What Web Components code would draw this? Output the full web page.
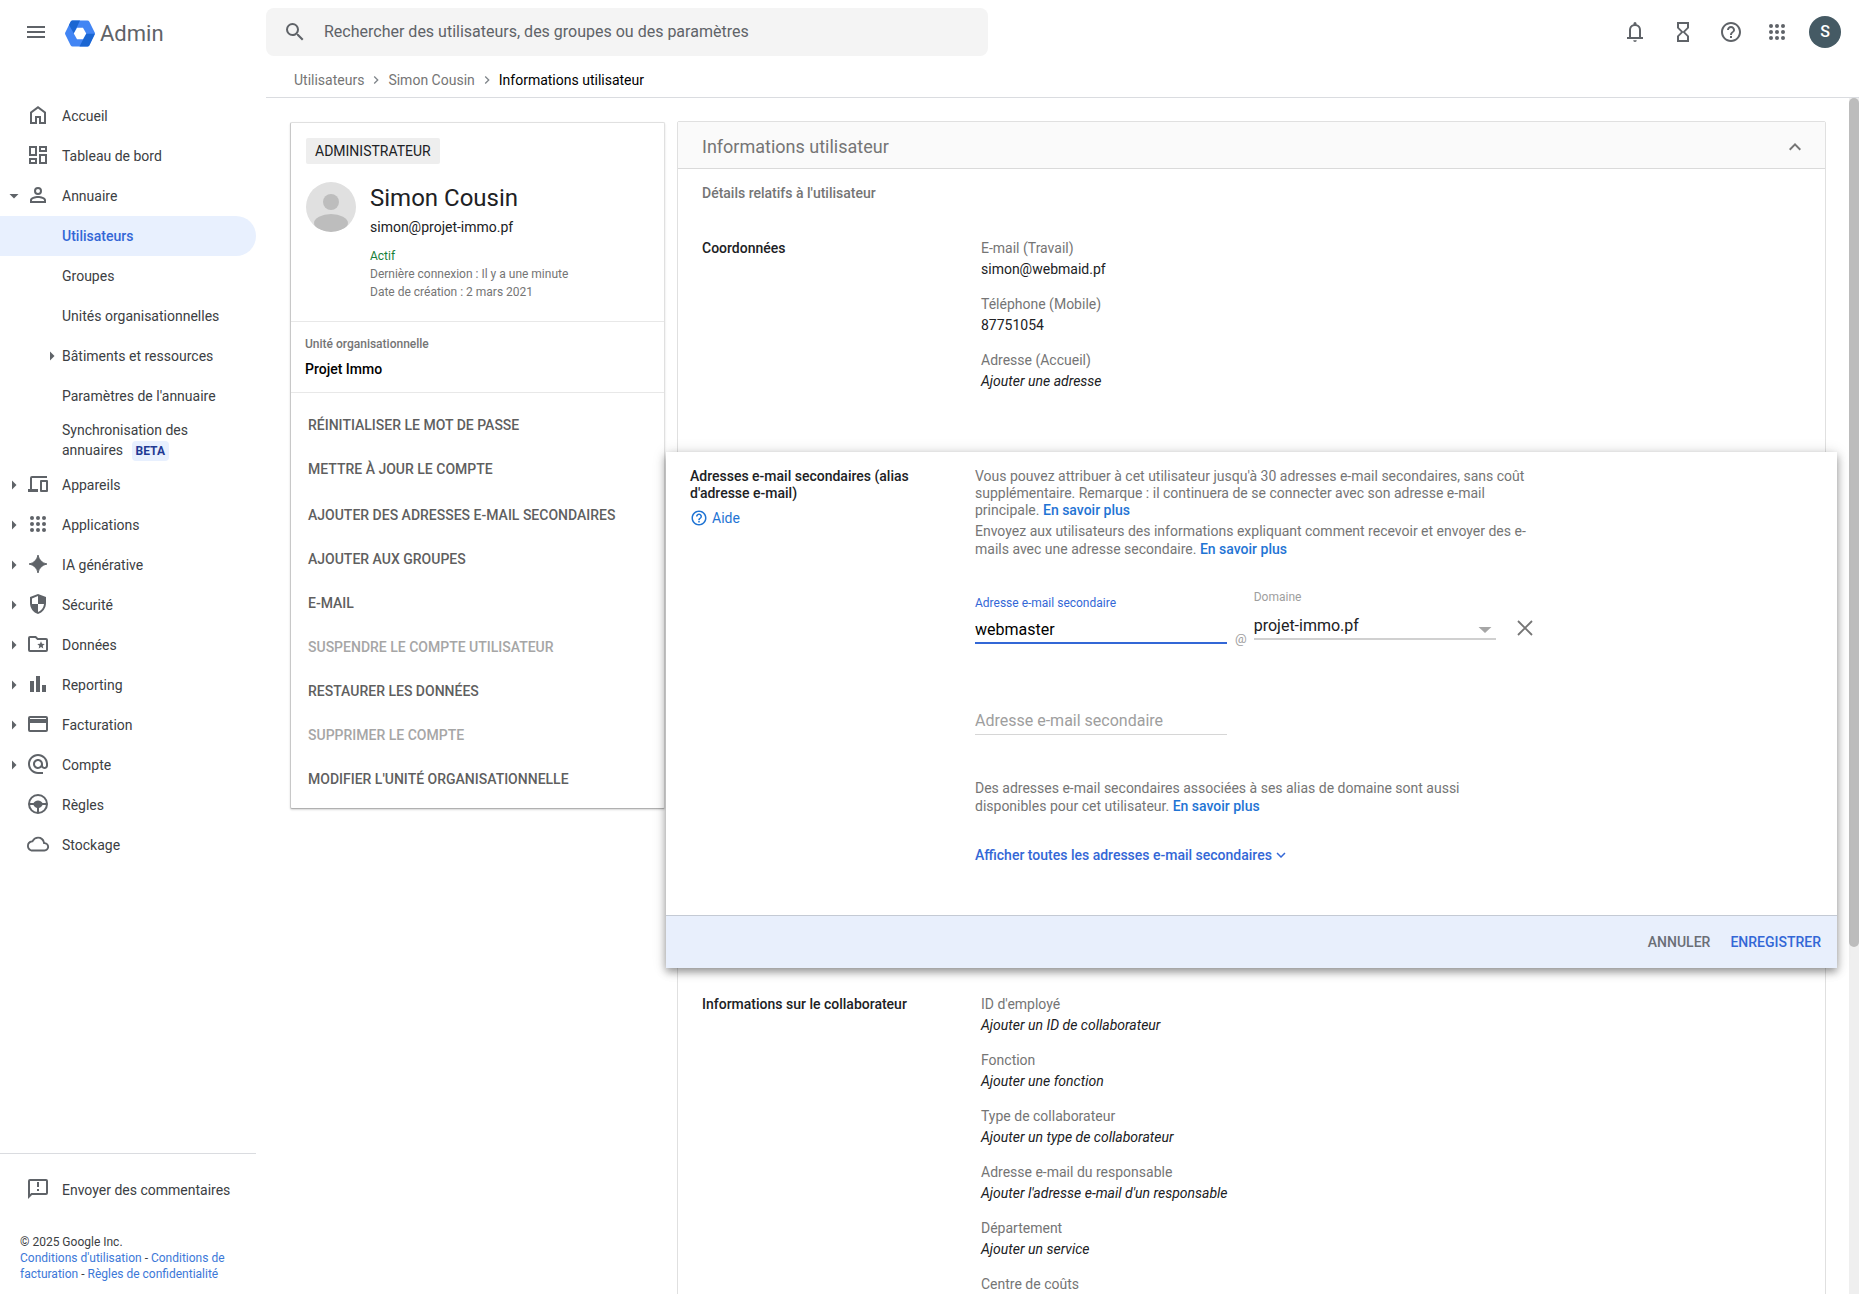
<!DOCTYPE html>
<html lang="fr">
<head>
<meta charset="utf-8">
<title>Admin - Informations utilisateur</title>
<style>
  body { margin: 0; font-family: Roboto, "Liberation Sans", sans-serif; font-size: 14px; line-height: 20px; color: #202124; background: #fff; }
</style>
</head>
<body>
<admin-app></admin-app>
<script>
const ICONS = {
  menu: '<path d="M3 18h18v-2H3v2zm0-5h18v-2H3v2zm0-7v2h18V6H3z"/>',
  search: '<path d="M15.5 14h-.79l-.28-.27A6.47 6.47 0 0 0 16 9.5 6.5 6.5 0 1 0 9.5 16c1.61 0 3.09-.59 4.23-1.57l.27.28v.79l5 4.99L20.49 19l-4.99-5zm-6 0C7.01 14 5 11.99 5 9.5S7.01 5 9.5 5 14 7.01 14 9.5 11.99 14 9.5 14z"/>',
  bell: '<path d="M4 19v-2h2v-7c0-2.8 1.7-5.1 4.5-5.8V3.5a1.5 1.5 0 0 1 3 0v.7C16.3 4.9 18 7.2 18 10v7h2v2H4zm4-2h8v-7a4 4 0 0 0-8 0v7zM12 22a1.8 1.8 0 0 1-1.8-1.8h3.6A1.8 1.8 0 0 1 12 22z"/>',
  hourglass: '<path d="M6 2v6l4 4-4 4v6h12v-6l-4-4 4-4V2H6zm10 14.5V20H8v-3.500l4-4 4 4zm-4-5-4-4V4h8v3.500l-4 4z"/>',
  help: '<path d="M11 18h2v-2h-2v2zm1-16C6.480 2 2 6.480 2 12s4.480 10 10 10 10-4.480 10-10S17.520 2 12 2zm0 18c-4.410 0-8-3.590-8-8s3.590-8 8-8 8 3.590 8 8-3.590 8-8 8zm0-14c-2.210 0-4 1.790-4 4h2c0-1.100.9-2 2-2s2 .9 2 2c0 2-3 1.750-3 5h2c0-2.250 3-2.500 3-5 0-2.210-1.790-4-4-4z"/>',
  apps: '<g><circle cx="6" cy="6" r="2"/><circle cx="12" cy="6" r="2"/><circle cx="18" cy="6" r="2"/><circle cx="6" cy="12" r="2"/><circle cx="12" cy="12" r="2"/><circle cx="18" cy="12" r="2"/><circle cx="6" cy="18" r="2"/><circle cx="12" cy="18" r="2"/><circle cx="18" cy="18" r="2"/></g>',
  home: '<path d="M6 19h3v-6h6v6h3v-9l-6-4.500L6 10v9zm-2 2V9l8-6 8 6v12h-7v-6h-2v6H4z"/>',
  dashboard: '<path d="M19 5v2h-4V5h4M9 5v6H5V5h4m10 8v6h-4v-6h4M9 17v2H5v-2h4M21 3h-8v6h8V3zM11 3H3v10h8V3zm10 8h-8v10h8V11zm-10 4H3v6h8v-6z"/>',
  person: '<path d="M12 6a2 2 0 1 1 0 4 2 2 0 0 1 0-4m0 9c3 0 6 1.400 6 2v1H6v-1c0-.6 3-2 6-2M12 4a4 4 0 1 0 0 8 4 4 0 0 0 0-8zm0 9c-2.670 0-8 1.340-8 4v3h16v-3c0-2.660-5.330-4-8-4z"/>',
  devices: '<path d="M21 4v2H6v11h6v3H2v-3h2V6a2 2 0 0 1 2-2zM15 8h6a1 1 0 0 1 1 1v10a1 1 0 0 1-1 1h-6a1 1 0 0 1-1-1V9a1 1 0 0 1 1-1zm1 2v8h4v-8z" fill-rule="evenodd"/>',
  spark: '<path d="M12 3Q13.500 10.500 21 12 13.500 13.500 12 21 10.500 13.500 3 12 10.500 10.500 12 3z" stroke="currentColor" stroke-width=".9"/>',
  shield: '<path fill-rule="evenodd" d="M12 2 4 5v6.100c0 5 3.400 9.800 8 10.900 4.600-1.100 8-5.900 8-10.900V5zm0 10h6c-.4 3.700-2.900 7-6 8v-8H6V6.400l6-2.300z"/>',
  folder: '<path fill-rule="evenodd" d="M4 4h6l2 2h8a2 2 0 0 1 2 2v10a2 2 0 0 1-2 2H4a2 2 0 0 1-2-2V6a2 2 0 0 1 2-2zm0 2v12h16V8h-8.800l-2-2z"/><path d="m15 9.300 1 2.500 2.700.2-2 1.800.6 2.700-2.300-1.400-2.300 1.400.6-2.700-2-1.800 2.700-.2z"/>',
  bars: '<path d="M4 9h4v11H4zM10 4h4v16h-4zM16 13h4v7h-4z"/>',
  card: '<path d="M20 4H4a2 2 0 0 0-2 2v12a2 2 0 0 0 2 2h16a2 2 0 0 0 2-2V6a2 2 0 0 0-2-2zm0 14H4v-7h16v7zm0-11H4V6h16v1z"/>',
  at: '<path d="M12 2C6.480 2 2 6.480 2 12s4.480 10 10 10h5v-2h-5c-4.340 0-8-3.660-8-8s3.660-8 8-8 8 3.660 8 8v1.430c0 .79-.71 1.570-1.500 1.570s-1.500-.78-1.500-1.570V12c0-2.760-2.240-5-5-5s-5 2.240-5 5 2.240 5 5 5c1.380 0 2.640-.56 3.540-1.470.65.89 1.770 1.470 2.960 1.470 1.970 0 3.500-1.600 3.500-3.570V12c0-5.520-4.480-10-10-10zm0 13c-1.660 0-3-1.340-3-3s1.340-3 3-3 3 1.340 3 3-1.340 3-3 3z"/>',
  wheel: '<circle cx="12" cy="12" r="9" fill="none" stroke="currentColor" stroke-width="2"/><path d="M3 11h4.500C8.500 9.500 10 8.500 12 8.500s3.500 1 4.500 2.500H21v2h-4.500c-.6 1.300-1.700 2.600-3.500 3v5h-2v-5c-1.800-.4-2.900-1.700-3.500-3H3z"/>',
  cloud: '<g transform="translate(1 1) scale(.92)"><path d="M19.350 10.040A7.490 7.490 0 0 0 12 4C9.110 4 6.600 5.640 5.350 8.040A5.994 5.994 0 0 0 0 14c0 3.310 2.690 6 6 6h13c2.760 0 5-2.240 5-5 0-2.640-2.050-4.780-4.650-4.960zM19 18H6c-2.210 0-4-1.790-4-4 0-2.050 1.530-3.760 3.560-3.970l1.070-.11.5-.95A5.469 5.469 0 0 1 12 6c2.620 0 4.880 1.860 5.390 4.430l.3 1.500 1.530.11A2.980 2.980 0 0 1 22 15c0 1.650-1.350 3-3 3z"/></g>',
  feedback: '<path d="M20 2H4a2 2 0 0 0-2 2v18l4-4h14a2 2 0 0 0 2-2V4a2 2 0 0 0-2-2zm0 14H5.170L4 17.170V4h16v12zM11 12h2v2h-2zm0-7h2v5h-2z"/>',
  down: '<path d="M7.500 10h9L12 14.500z"/>',
  right: '<path d="M10 7.500v9l4.500-4.500z"/>',
  caret: '<path d="M5 12h14l-7 6.500z"/>',
  chevron: '<path d="M10 6 8.600 7.400 13.200 12l-4.600 4.600L10 18l6-6z"/>',
  up: '<path d="m12 8-6 6 1.400 1.400 4.600-4.600 4.600 4.600L18 14z"/>',
  expand: '<path d="M16.600 8.600 12 13.200 7.400 8.600 6 10l6 6 6-6z"/>',
  close: '<path d="M5 5 19 19M19 5 5 19" stroke="currentColor" stroke-width="1.800" fill="none"/>',
  logo: '<path d="M7.600.5h14.800q1.300 0 2 1.200l5.200 10.600q.7 1.200 0 2.400l-5.200 10.600q-.7 1.200-2 1.200H7.600q-1.300 0-2-1.200L.4 14.700q-.7-1.200 0-2.400L5.600 1.700q.7-1.200 2-1.200z" fill="#4285f4"/><path d="M7.600.5H15L8.900 13.500 4 5l1.600-3.300q.7-1.200 2-1.200z" fill="#1b66d2"/><path d="M29.900 13.800l-5.500 11.500q-.7 1.200-2 1.200h-7.900l6.600-12.700z" fill="#1b66d2"/><path d="M12 7.700h6l3.200 5.800-3.200 5.800h-6l-3.200-5.800z" fill="#fff"/>'
};

function define(name, html, setup) {
  const tpl = document.createElement('template');
  tpl.innerHTML = html;
  customElements.define(name, class extends HTMLElement {
    constructor() {
      super();
      this.attachShadow({ mode: 'open' }).append(tpl.content.cloneNode(true));
    }
    connectedCallback() { if (setup) setup(this, this.shadowRoot); }
  });
}

define('adm-icon', `<style>
  :host { display: inline-flex; flex: none; width: 24px; height: 24px; }
  svg { width: 100%; height: 100%; fill: currentColor; display: block; }
</style><svg aria-hidden="true"></svg>`, (el, root) => {
  const svg = root.querySelector('svg');
  const name = el.getAttribute('name');
  svg.setAttribute('viewBox', name === 'logo' ? '0 0 30 27' : '0 0 24 24');
  svg.innerHTML = ICONS[name];
});

define('adm-topbar', `<style>
  :host { display: grid; grid-template-columns: 266px minmax(0, 1fr) auto; align-items: center; height: 64px; color: #5f6368; }
  .brand { display: flex; align-items: center; padding-left: 24px; }
  .brand a { display: flex; align-items: center; gap: 5px; margin-left: 17px; padding-top: 3px; color: inherit; text-decoration: none; font-size: 22px; line-height: 28px; }
  .brand adm-icon[name=logo] { width: 30px; height: 27px; }
  form { display: flex; align-items: center; gap: 17px; width: 100%; max-width: 722px; height: 48px; margin: 0; padding: 0 17px; box-sizing: border-box; background: #f4f4f4; border-radius: 8px; }
  input { flex: 1; min-width: 0; border: 0; padding: 0; background: none; outline: 0; font: 16px/24px Roboto, sans-serif; color: #202124; }
  input::placeholder { color: #5f6368; opacity: 1; }
  button { display: inline-flex; align-items: center; justify-content: center; border: 0; padding: 0; background: none; color: inherit; font: inherit; }
  .tools { display: flex; padding-right: 10px; }
  .tools button { width: 48px; height: 48px; }
  .help { margin-right: -2px; }
  .me { display: grid; place-items: center; width: 32px; height: 32px; border-radius: 50%; background: #455a64; color: #fff; font-size: 16px; font-weight: 500; }
</style>
<div class="brand"><button aria-label="Menu"><adm-icon name="menu"></adm-icon></button><a href="#"><adm-icon name="logo"></adm-icon><span>Admin</span></a></div>
<form role="search"><adm-icon name="search"></adm-icon><input type="text" aria-label="Rechercher" placeholder="Rechercher des utilisateurs, des groupes ou des paramètres"></form>
<div class="tools">
  <button aria-label="Notifications"><adm-icon name="bell"></adm-icon></button>
  <button aria-label="Tâches"><adm-icon name="hourglass"></adm-icon></button>
  <button class="help" aria-label="Assistance"><adm-icon name="help"></adm-icon></button>
  <button aria-label="Applications Google"><adm-icon name="apps"></adm-icon></button>
  <button aria-label="Compte"><span class="me">S</span></button>
</div>`);

define('adm-nav-item', `<style>
  :host { display: block; }
  a { display: grid; grid-template-columns: 26px 24px 1fr; align-items: center; min-height: 40px; color: #3c4043; text-decoration: none; border-radius: 0 20px 20px 0; }
  .arrow { grid-column: 1; justify-self: end; }
  .arrow, .icon { color: #5f6368; display: flex; }
  .icon { padding-bottom: 2px; }
  .label { grid-column: 3; padding-left: 12px; }
  :host([sub]) .arrow { grid-column: 2; margin-right: -14px; }
  :host([sub]) .icon { display: none; }
  :host([selected]) a { background: #e8f0fe; color: #3367d6; font-weight: 500; }
  :host([tall]) a { min-height: 49px; align-items: start; padding-top: 4px; box-sizing: border-box; }
</style><a href="#"><span class="arrow"></span><span class="icon"></span><span class="label"><slot></slot></span></a>`, (el, root) => {
  const put = (sel, attr) => { if (el.hasAttribute(attr)) root.querySelector(sel).innerHTML = '<adm-icon name="' + el.getAttribute(attr) + '"></adm-icon>'; };
  put('.arrow', 'arrow');
  put('.icon', 'icon');
});

define('adm-sidebar', `<style>
  :host { display: flex; flex-direction: column; width: 256px; }
  nav { flex: 1; padding-top: 32px; }
  .beta { display: inline-block; margin-left: 5px; padding: 0 4px; border-radius: 4px; background: #e8f0fe; color: #1f3a93; font-size: 12px; font-weight: 700; }
  .feedback { border-top: 1px solid #dadce0; padding: 16px 0 24px; }
  footer { padding: 0 16px 12px 20px; font-size: 12px; line-height: 16px; color: #3c4043; }
  footer a { color: #3c78d8; text-decoration: none; }
</style>
<nav aria-label="Navigation principale">
  <adm-nav-item icon="home">Accueil</adm-nav-item>
  <adm-nav-item icon="dashboard">Tableau de bord</adm-nav-item>
  <adm-nav-item icon="person" arrow="down">Annuaire</adm-nav-item>
  <adm-nav-item selected>Utilisateurs</adm-nav-item>
  <adm-nav-item>Groupes</adm-nav-item>
  <adm-nav-item>Unités organisationnelles</adm-nav-item>
  <adm-nav-item sub arrow="right">Bâtiments et ressources</adm-nav-item>
  <adm-nav-item>Paramètres de l'annuaire</adm-nav-item>
  <adm-nav-item tall>Synchronisation des<br>annuaires <span class="beta">BETA</span></adm-nav-item>
  <adm-nav-item icon="devices" arrow="right">Appareils</adm-nav-item>
  <adm-nav-item icon="apps" arrow="right">Applications</adm-nav-item>
  <adm-nav-item icon="spark" arrow="right">IA générative</adm-nav-item>
  <adm-nav-item icon="shield" arrow="right">Sécurité</adm-nav-item>
  <adm-nav-item icon="folder" arrow="right">Données</adm-nav-item>
  <adm-nav-item icon="bars" arrow="right">Reporting</adm-nav-item>
  <adm-nav-item icon="card" arrow="right">Facturation</adm-nav-item>
  <adm-nav-item icon="at" arrow="right">Compte</adm-nav-item>
  <adm-nav-item icon="wheel">Règles</adm-nav-item>
  <adm-nav-item icon="cloud">Stockage</adm-nav-item>
</nav>
<div class="feedback"><adm-nav-item icon="feedback">Envoyer des commentaires</adm-nav-item></div>
<footer>© 2025 Google Inc.<br><a href="#">Conditions d'utilisation</a> - <a href="#">Conditions de<br>facturation</a> - <a href="#">Règles de confidentialité</a></footer>`);

define('adm-breadcrumb', `<style>
  :host { display: flex; align-items: center; height: 31px; padding: 0 0 2px 28px; border-bottom: 1px solid #dadce0; color: #80868b; }
  a { color: #757575; text-decoration: none; }
  adm-icon { width: 16px; height: 16px; margin: 0 4px; }
  b { font-weight: 400; color: #000; }
</style><a href="#">Utilisateurs</a><adm-icon name="chevron"></adm-icon><a href="#">Simon Cousin</a><adm-icon name="chevron"></adm-icon><b>Informations utilisateur</b>`);

define('adm-user-card', `<style>
  :host { display: block; box-sizing: border-box; background: #fff; border: 1px solid #e0e0e0; border-left-color: #c8c8c8; border-bottom-color: #b0b0b0; border-radius: 2px; box-shadow: 0 1px 2px rgba(0,0,0,.16); }
  .top { padding: 15px 15px 20px; border-bottom: 1px solid #e8e8e8; }
  .badge { display: inline-block; padding: 3px 9px; background: #eee; color: #202124; border-radius: 2px; vertical-align: top; }
  .who { display: flex; gap: 14px; margin-top: 18px; }
  .who svg { flex: none; width: 50px; height: 50px; }
  h1 { margin: 0; font-size: 24px; line-height: 32px; font-weight: 400; }
  .mail { margin: 3px 0 10px; }
  .meta { font-size: 12px; line-height: 18px; color: #757575; }
  .ok { color: #188038; }
  .ou { padding: 14px 14px 13px; border-bottom: 1px solid #e8e8e8; font-weight: 500; color: #000; }
  .ou small { display: block; margin-bottom: 7px; font-size: 12px; line-height: 16px; color: #757575; }
  .acts { display: grid; gap: 2px; padding: 10px 0 7px; }
  .acts div { display: grid; }
  button { height: 44px; padding: 0 17px; border: 0; background: none; text-align: left; font: 500 14px/20px Roboto, sans-serif; color: #5f5f5f; }
  button:disabled { color: #a6a6a6; }
</style>
<div class="top"><span class="badge">ADMINISTRATEUR</span>
  <div class="who"><svg viewBox="0 0 50 50" aria-hidden="true"><defs><clipPath id="c"><circle cx="25" cy="25" r="25"/></clipPath></defs><g clip-path="url(#c)"><rect width="50" height="50" fill="#e0e0e0"/><circle cx="25" cy="20" r="8" fill="#bdbdbd"/><ellipse cx="25" cy="41" rx="17" ry="9" fill="#bdbdbd"/></g></svg>
    <div><h1>Simon Cousin</h1><div class="mail">simon@projet-immo.pf</div>
      <div class="meta ok">Actif</div><div class="meta">Dernière connexion : Il y a une minute</div><div class="meta">Date de création : 2 mars 2021</div></div></div></div>
<div class="ou"><small>Unité organisationnelle</small>Projet Immo</div>
<div class="acts">
  <div><button>RÉINITIALISER LE MOT DE PASSE</button><button>METTRE À JOUR LE COMPTE</button></div>
  <div><button>AJOUTER DES ADRESSES E-MAIL SECONDAIRES</button><button>AJOUTER AUX GROUPES</button><button>E-MAIL</button><button disabled>SUSPENDRE LE COMPTE UTILISATEUR</button><button>RESTAURER LES DONNÉES</button><button disabled>SUPPRIMER LE COMPTE</button><button>MODIFIER L'UNITÉ ORGANISATIONNELLE</button></div>
</div>`);

define('adm-field', `<style>
  :host { display: block; line-height: 21px; color: #202124; }
  .name { color: #757575; }
  :host([empty]) .value { font-style: italic; }
</style><div class="name"></div><div class="value"><slot></slot></div>`, (el, root) => {
  root.querySelector('.name').textContent = el.getAttribute('name');
});

define('adm-section', `<style>
  :host { display: grid; grid-template-columns: 279px minmax(0, 1fr); padding: 26px 24px 60px; }
  h3 { margin: 0; font-size: 14px; line-height: 21px; font-weight: 500; }
  .fields { display: grid; gap: 14px; }
</style><h3></h3><div class="fields"><slot></slot></div>`, (el, root) => {
  root.querySelector('h3').textContent = el.getAttribute('heading');
});

define('adm-text-field', `<style>
  :host { display: block; width: 252px; }
  label { display: block; font-size: 12px; line-height: 16px; color: #3367d6; }
  input { display: block; width: 100%; height: 33px; box-sizing: border-box; margin: 0; padding: 5px 0 0; border: 0; border-bottom: 2px solid #3367d6; border-radius: 0; outline: 0; background: none; font: 16px/24px Roboto, sans-serif; color: #000; }
  input::placeholder { color: #9e9e9e; opacity: 1; }
  :host([resting]) input { border-bottom: 1px solid #d6d6d6; }
</style><label for="i">Adresse e-mail secondaire</label><input id="i" type="text">`, (el, root) => {
  const input = root.querySelector('input');
  input.value = el.getAttribute('value') || '';
  if (el.hasAttribute('resting')) {
    root.querySelector('label').remove();
    input.placeholder = 'Adresse e-mail secondaire';
    input.setAttribute('aria-label', 'Adresse e-mail secondaire');
  }
});

define('adm-domain-select', `<style>
  :host { display: block; width: 242px; }
  label { display: block; font-size: 12px; line-height: 16px; color: #9e9e9e; }
  .box { display: grid; border-bottom: 2px solid #d0d0d0; }
  select, adm-icon { grid-area: 1 / 1; }
  select { appearance: none; width: 100%; height: 33px; margin: 0; padding: 9px 0 0; border: 0; outline: 0; background: none; font: 16px/24px Roboto, sans-serif; color: #202124; }
  adm-icon { width: 22px; height: 22px; justify-self: end; align-self: end; color: #a6a6a6; pointer-events: none; }
</style><label for="d">Domaine</label><div class="box"><select id="d"><option>projet-immo.pf</option></select><adm-icon name="caret"></adm-icon></div>`);

define('adm-alias-editor', `<style>
  :host { display: block; position: relative; margin: 0 -12px; background: #fff; box-shadow: 0 1px 14px rgba(0,0,0,.14), 0 4px 8px rgba(0,0,0,.36); }
  .body { display: grid; grid-template-columns: 285px minmax(0, 1fr); padding: 16px 24px 50px; }
  h3 { margin: 0; max-width: 230px; font-size: 14px; line-height: 17px; font-weight: 500; }
  a { color: #1f74d4; text-decoration: none; }
  p a { font-weight: 500; }
  .aide { display: inline-flex; align-items: center; gap: 4px; margin-top: 6px; }
  .aide adm-icon { width: 18px; height: 18px; }
  p { margin: 0; max-width: 560px; color: #757575; line-height: 17px; }
  p + p { margin-top: 3px; line-height: 18px; }
  .row { display: flex; align-items: flex-start; margin-top: 31px; }
  .row adm-text-field { padding-top: 6px; }
  .sep { padding: 40px 7px 0 8px; color: #9e9e9e; font-size: 13px; }
  .close { display: flex; margin: 27px 0 0 17px; padding: 0; border: 0; background: none; color: #757575; }
  adm-text-field[resting] { margin-top: 53px; }
  .foot { max-width: 500px; margin-top: 44px; line-height: 18px; }
  .all { display: inline-flex; align-items: center; margin-top: 30px; color: #3367d6; font-weight: 500; }
  .all adm-icon { width: 18px; height: 18px; }
  footer { display: flex; justify-content: flex-end; align-items: center; gap: 20px; height: 52px; padding-right: 16px; border-top: 1px solid #c4cad4; background: #e8effc; }
  footer button { border: 0; padding: 0; background: none; font: 500 14px/20px Roboto, sans-serif; color: #6a6e76; }
  footer .save { color: #3367d6; }
</style>
<div class="body">
  <div><h3>Adresses e-mail secondaires (alias d'adresse e-mail)</h3><a class="aide" href="#"><adm-icon name="help"></adm-icon>Aide</a></div>
  <div>
    <p>Vous pouvez attribuer à cet utilisateur jusqu'à 30 adresses e-mail secondaires, sans coût supplémentaire. Remarque : il continuera de se connecter avec son adresse e-mail <span>principale.</span> <a href="#">En savoir plus</a></p>
    <p>Envoyez aux utilisateurs des informations expliquant comment recevoir et envoyer des e-<span>mails avec une adresse secondaire.</span> <a href="#">En savoir plus</a></p>
    <div class="row"><adm-text-field value="webmaster"></adm-text-field><span class="sep">@</span><adm-domain-select></adm-domain-select><button class="close" aria-label="Supprimer"><adm-icon name="close"></adm-icon></button></div>
    <adm-text-field resting></adm-text-field>
    <p class="foot">Des adresses e-mail secondaires associées à ses alias de domaine sont aussi <span>disponibles pour cet utilisateur.</span> <a href="#">En savoir plus</a></p>
    <a class="all" href="#">Afficher toutes les adresses e-mail secondaires<adm-icon name="expand"></adm-icon></a>
  </div>
</div>
<footer><button>ANNULER</button><button class="save">ENREGISTRER</button></footer>`);

define('adm-panel', `<style>
  :host { display: block; border: 1px solid #e0e0e0; border-radius: 2px; background: #fff; }
  header { display: flex; align-items: center; justify-content: space-between; height: 47px; padding: 4px 18px 0 24px; box-sizing: border-box; border-bottom: 1px solid #dadada; background: #fafafa; color: #757575; }
  h2 { margin: 0; font-size: 18px; line-height: 24px; font-weight: 400; }
  button { display: flex; padding: 0; border: 0; background: none; color: #757575; }
  .sub { padding: 14px 24px 9px; font-weight: 500; color: #757575; }
</style>
<header><h2>Informations utilisateur</h2><button aria-label="Réduire"><adm-icon name="up"></adm-icon></button></header>
<div class="sub">Détails relatifs à l'utilisateur</div>
<slot></slot>`);

define('admin-app', `<style>
  :host { display: flex; flex-direction: column; height: 100vh; overflow: hidden; }
  .work { display: grid; grid-template-columns: 266px minmax(0, 1fr); flex: 1; min-height: 0; }
  main { display: flex; flex-direction: column; min-width: 0; min-height: 0; }
  .view { display: flex; flex: 1; min-height: 0; overflow: hidden; }
  .content { display: grid; grid-template-columns: 375px minmax(0, 1fr); gap: 12px; align-items: start; flex: 1; min-width: 0; padding: 23px 23px 0 24px; }
  adm-user-card { margin-top: 1px; }
  .track { width: 10px; background: #efefef; }
  .thumb { height: 71%; border-radius: 5px; background: #bcbcbc; }
</style>
<adm-topbar></adm-topbar>
<div class="work"><adm-sidebar></adm-sidebar>
<main><adm-breadcrumb></adm-breadcrumb>
  <div class="view"><div class="content">
    <adm-user-card></adm-user-card>
    <adm-panel>
      <adm-section heading="Coordonnées">
        <adm-field name="E-mail (Travail)">simon@webmaid.pf</adm-field>
        <adm-field name="Téléphone (Mobile)">87751054</adm-field>
        <adm-field name="Adresse (Accueil)" empty>Ajouter une adresse</adm-field>
      </adm-section>
      <adm-alias-editor></adm-alias-editor>
      <adm-section heading="Informations sur le collaborateur">
        <adm-field name="ID d'employé" empty>Ajouter un ID de collaborateur</adm-field>
        <adm-field name="Fonction" empty>Ajouter une fonction</adm-field>
        <adm-field name="Type de collaborateur" empty>Ajouter un type de collaborateur</adm-field>
        <adm-field name="Adresse e-mail du responsable" empty>Ajouter l'adresse e-mail d'un responsable</adm-field>
        <adm-field name="Département" empty>Ajouter un service</adm-field>
        <adm-field name="Centre de coûts"></adm-field>
      </adm-section>
    </adm-panel>
  </div><div class="track"><div class="thumb"></div></div></div>
</main></div>`);
</script>
</body>
</html>
